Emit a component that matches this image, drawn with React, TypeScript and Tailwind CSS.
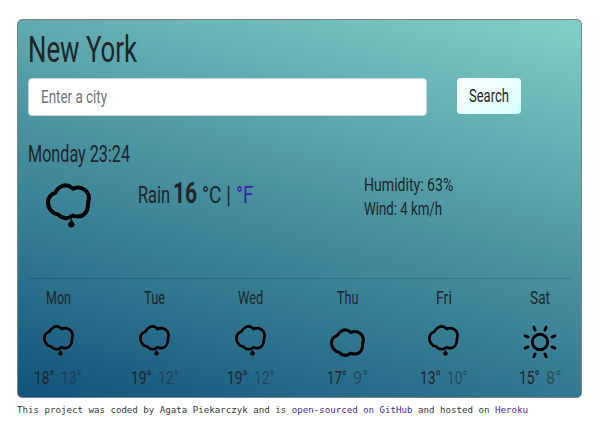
import { ReactNode, useLayoutEffect, useRef } from "react";

/** Condensed text: squeezes its content to the width of its own box. */
function Fit({ className = "", children }: { className?: string; children: ReactNode }) {
  const box = useRef<HTMLSpanElement>(null);
  const ink = useRef<HTMLSpanElement>(null);
  useLayoutEffect(() => {
    if (box.current && ink.current) {
      ink.current.style.transform = `scaleX(${box.current.clientWidth / ink.current.offsetWidth})`;
    }
  }, []);
  return (
    <span ref={box} className={`block shrink-0 whitespace-nowrap ${className}`}>
      <span ref={ink} className="block w-max origin-left">{children}</span>
    </span>
  );
}

const CLOUD =
  "M75 70C85 55 92 48 107 47C119 47 122 52 129 58C136 54 144 53 152 55C168 60 176 72 177 85C177 92 174 97 174 104C174 126 162 141 145 141C137 141 133 140 128 138C120 144 114 147 107 146C97 145 89 142 83 134C70 134 54 118 54 99C54 85 61 75 75 70Z";

function Cloud({ rain, className }: { rain?: boolean; className: string }) {
  return (
    <svg viewBox="48 41 135 134" className={className} fill="none" stroke="black" overflow="visible">
      <path d={CLOUD} strokeWidth="12" strokeLinejoin="round" />
      {rain && <path d="M124 146C123 154 114 159 114 165C114 170 119 174 124 174C129 174 134 170 134 165C134 159 125 154 124 146Z" fill="black" stroke="none" />}
    </svg>
  );
}

function Sun() {
  return (
    <svg viewBox="-17 -17 34 34" className="h-[34px] w-[34px]" fill="none" stroke="black" strokeWidth="2.9" strokeLinecap="round">
      <circle r="7.7" />
      {[22.5, 67.5, 112.5, 157.5, 202.5, 247.5, 292.5, 337.5].map((a) => (
        <path key={a} d="M12.9 0H16" transform={`rotate(${a})`} />
      ))}
    </svg>
  );
}

const DAYS = [
  { name: "Mon", w: "w-[25px]", icon: "rain", hi: "18°", lo: "13°", hw: "w-[21px]", lw: "w-[21px]" },
  { name: "Tue", w: "w-[21px]", icon: "rain", hi: "19°", lo: "12°", hw: "w-[21px]", lw: "w-[21px]" },
  { name: "Wed", w: "w-[25px]", icon: "rain", hi: "19°", lo: "12°", hw: "w-[21px]", lw: "w-[21px]" },
  { name: "Thu", w: "w-[21px]", icon: "cloud", hi: "17°", lo: "9°", hw: "w-[20px]", lw: "w-[15px]" },
  { name: "Fri", w: "w-[16px]", icon: "rain", hi: "13°", lo: "10°", hw: "w-[21px]", lw: "w-[21px]" },
  { name: "Sat", w: "w-[20px]", icon: "sun", hi: "15°", lo: "8°", hw: "w-[21px]", lw: "w-[15px]" },
];

export default function App() {
  return (
    <div className="h-[429px] w-[604px] overflow-hidden bg-white pl-[17px] pt-[19px] font-['Roboto',sans-serif] text-[18.5px] leading-6 text-[#212529]">
      <main className="flex h-[379px] w-[565px] flex-col rounded-[5px] border border-[#808080] bg-[linear-gradient(15deg,#15557e_2%,#347b92_31%,#4a92a0_52%,#63aeb2_74%,#80d0c7_100%)] px-[10px]">
        <h1 className="mt-[10px] h-[40px] text-[36px] leading-[40px]">
          <Fit className="w-[109px]">New York</Fit>
        </h1>
        <form className="mt-[8px] flex gap-[30px]">
          <div className="flex h-[38px] w-[399px] items-center rounded-[4px] border border-[#ced4da] bg-white px-[12px] text-[#6c757d]">
            <Fit className="w-[66px]">Enter a city</Fit>
          </div>
          <button type="button" className="flex h-[36px] w-[64px] items-center justify-center rounded-[4px] bg-linear-to-br from-white to-[#d8ffff]">
            <Fit className="w-[40px]">Search</Fit>
          </button>
        </form>
        <div className="mt-[27px] h-[24px] text-[23px]">
          <Fit className="w-[102px]">Monday 23:24</Fit>
        </div>
        <section className="mt-[15px] flex h-[96px]">
          <div className="w-[110px] pl-[18px] pt-px">
            <Cloud rain className="h-[45px] w-[45px]" />
          </div>
          <div className="-mt-px flex h-[24px] w-[226px] items-baseline text-[23px]">
            <Fit className="mr-[3px] w-[32px]">Rain</Fit>
            <Fit className="mr-[5px] w-[24px] text-[29px] font-bold">16</Fit>
            <Fit className="mr-[5px] w-[29px]">°C |</Fit>
            <Fit className="w-[17px] text-[#3c1fa3]">°F</Fit>
          </div>
          <div className="-mt-[9px]">
            <Fit className="w-[89px]">Humidity: 63%</Fit>
            <Fit className="w-[78px]">Wind: 4 km/h</Fit>
          </div>
        </section>
        <hr className="h-px shrink-0 border-0 bg-black/15" />
        <section className="-ml-[18px] mt-[7px] grid w-[578.4px] grid-cols-6">
          {DAYS.map((d) => (
            <div key={d.name} className="flex flex-col items-center">
              <Fit className={d.w}>{d.name}</Fit>
              <div className="flex h-[56px] w-full justify-center pt-[15px]">
                {d.icon === "rain" && <Cloud rain className="h-[31px] w-[31px]" />}
                {d.icon === "cloud" && <Cloud className="mt-[3px] h-[35px] w-[35px]" />}
                {d.icon === "sun" && <Sun />}
              </div>
              <div className="flex gap-[6px]">
                <Fit className={d.hw}>{d.hi}</Fit>
                <Fit className={`${d.lw} opacity-50`}>{d.lo}</Fit>
              </div>
            </div>
          ))}
        </section>
      </main>
      <footer className="mt-[5px] font-['DejaVu_Sans_Mono',monospace] text-[9px] leading-[14px] text-[#343a40]">
        <Fit className="w-[511px]">
          This project was coded by Agata Piekarczyk and is <a className="text-[#4b2aa5]">open-sourced on GitHub</a> and hosted on <a className="text-[#4b2aa5]">Heroku</a>
        </Fit>
      </footer>
    </div>
  );
}
